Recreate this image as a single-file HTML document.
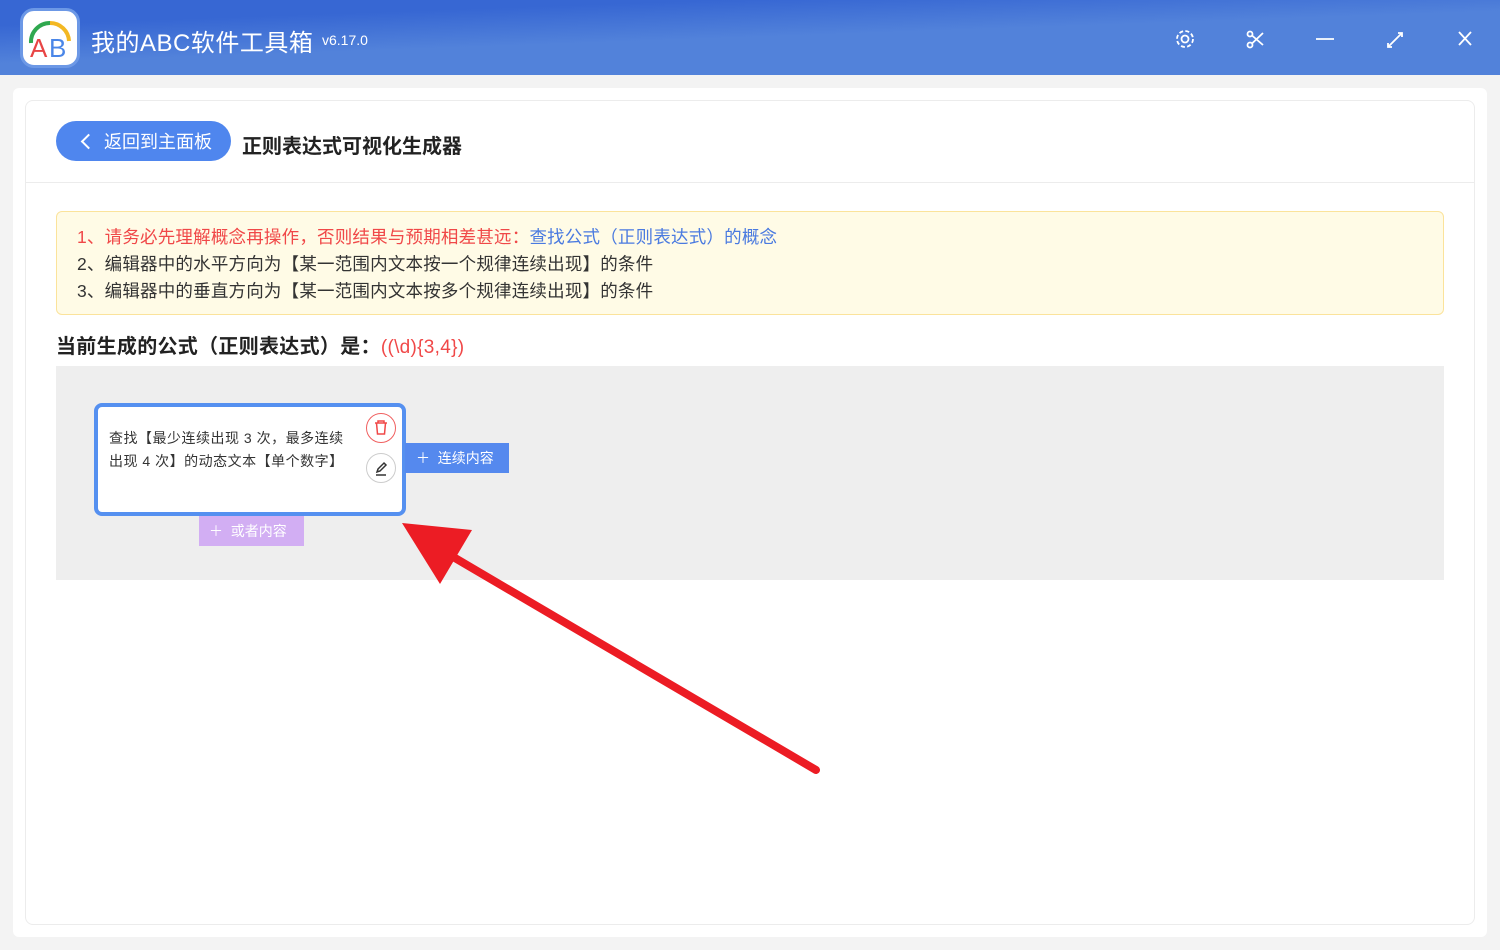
<!DOCTYPE html>
<html><head><meta charset="utf-8"><style>
*{margin:0;padding:0;box-sizing:border-box}
body{width:1500px;height:950px;background:#f3f3f3;font-family:"Liberation Sans","Noto Sans CJK SC",sans-serif;position:relative;overflow:hidden}
.hdr{position:absolute;left:0;top:0;width:1500px;height:75px;background:linear-gradient(178deg,#3767d3 0%,#3767d3 20%,#5282da 50%,#5282da 100%)}
.logo{position:absolute;left:20px;top:8px;width:60px;height:60px;border-radius:14px;background:#fff;border:3px solid #6c98e6}
.title{position:absolute;left:91px;top:23px;color:#fff;font-size:24px;letter-spacing:0.5px}
.ver{position:absolute;left:322px;top:32px;color:#fff;font-size:14px}
.card{position:absolute;left:13px;top:88px;width:1474px;height:849px;background:#fff;border-radius:6px}
.inner{position:absolute;left:25px;top:100px;width:1450px;height:825px;border:1px solid #ececec;border-radius:8px}
.back{position:absolute;left:56px;top:121px;width:175px;height:40px;border-radius:20px;background:#4f86ee;color:#fff;font-size:18px;line-height:42px;padding-left:48px}
.back:before{content:"";position:absolute;left:27px;top:15px;width:9px;height:9px;border-left:2px solid #fff;border-bottom:2px solid #fff;transform:rotate(45deg)}
.ptitle{position:absolute;left:242px;top:130px;font-size:20px;font-weight:bold;color:#222}
.div{position:absolute;left:26px;top:182px;width:1448px;height:1px;background:#ececec}
.note{position:absolute;left:56px;top:211px;width:1388px;height:104px;background:#fffbe6;border:1px solid #fbe39b;border-radius:6px;padding:12px 0 0 20px;font-size:17.5px;letter-spacing:0.2px;line-height:27px;color:#333}
.r{color:#f04848}.b{color:#4a7ae0}
.flab{position:absolute;left:56px;top:330px;font-size:20px;font-weight:bold;color:#222;letter-spacing:0.3px}
.flab span{color:#f04848;font-weight:normal;font-size:19px}
.canvas{position:absolute;left:56px;top:366px;width:1388px;height:214px;background:#eeeeee}
.node{position:absolute;left:94px;top:403px;width:312px;height:113px;border:4px solid #5590f0;border-radius:8px;background:#fff;padding:20px 0 0 11px;font-size:14px;letter-spacing:0.5px;line-height:23px;color:#333}
.ic{position:absolute;width:30px;height:30px;border-radius:50%;background:#fff}
.add1{position:absolute;left:405px;top:443px;width:104px;height:30px;background:#5589ee;color:#fff;font-size:14px;line-height:30px;padding-left:11px}
.add2{position:absolute;left:199px;top:516px;width:105px;height:30px;background:#d2aef3;color:#fff;font-size:14px;line-height:30px;padding-left:10px}
</style></head><body>
<div class="hdr"></div>
<div class="logo"><svg width="54" height="54" viewBox="0 0 54 54"><path d="M8 32 A19 19 0 0 1 27 12" stroke="#2fa84f" stroke-width="4" fill="none"/><path d="M27 12 A19 19 0 0 1 46 30" stroke="#f3b823" stroke-width="4" fill="none"/><text x="7" y="46" font-size="26" font-family="Liberation Sans" fill="#e84545">A</text><text x="26" y="46" font-size="26" font-family="Liberation Sans" fill="#4a86e8">B</text></svg></div>
<div class="title">我的ABC软件工具箱</div><div class="ver">v6.17.0</div>
<svg style="position:absolute;left:1170px;top:26px" width="310" height="28" fill="none" stroke="#fff" stroke-width="1.8">
<circle cx="15" cy="13" r="3.5"/><circle cx="15" cy="13" r="8" stroke-dasharray="4 2.3"/>
<circle cx="80" cy="8" r="2.5"/><circle cx="80" cy="19" r="2.5"/><path d="M82 9.5 L93 19 M82 17.5 L93 7"/>
<path d="M146 13 H164"/>
<path d="M218 21 L232 7 M228 7 H232 V11 M218 17 V21 H222"/>
<path d="M289 6 L301 19 M301 6 L289 19"/></svg>
<div class="card"></div><div class="inner"></div>
<div class="back">返回到主面板</div>
<div class="ptitle">正则表达式可视化生成器</div>
<div class="div"></div>
<div class="note"><div class="r">1、请务必先理解概念再操作，否则结果与预期相差甚远：<span class="b">查找公式（正则表达式）的概念</span></div><div>2、编辑器中的水平方向为【某一范围内文本按一个规律连续出现】的条件</div><div>3、编辑器中的垂直方向为【某一范围内文本按多个规律连续出现】的条件</div></div>
<div class="flab">当前生成的公式（正则表达式）是：<span>((\d){3,4})</span></div>
<div class="canvas"></div>
<div class="node">查找【最少连续出现 3 次，最多连续<br>出现 4 次】的动态文本【单个数字】</div>
<div class="ic" style="left:366px;top:413px;border:1px solid #f06060"><svg width="28" height="28" fill="none" stroke="#f04848" stroke-width="1.5"><path d="M8 9 H20 M11 9 V7 H17 V9 M9.5 9 L10.5 20 H17.5 L18.5 9"/></svg></div>
<div class="ic" style="left:366px;top:453px;border:1px solid #ccc"><svg width="28" height="28" fill="none" stroke="#333" stroke-width="1.5"><path d="M10 18 L11 15 L17 9 L19 11 L13 17 Z M9 21 H19"/></svg></div>
<div class="add1">＋&nbsp; 连续内容</div>
<div class="add2">＋&nbsp; 或者内容</div>
<svg style="position:absolute;left:0;top:0" width="1500" height="950"><path d="M816 770 L455 558" stroke="#ec1c24" stroke-width="8" stroke-linecap="round"/><polygon points="402,523 472,530 440,584" fill="#ec1c24"/></svg>
</body></html>
